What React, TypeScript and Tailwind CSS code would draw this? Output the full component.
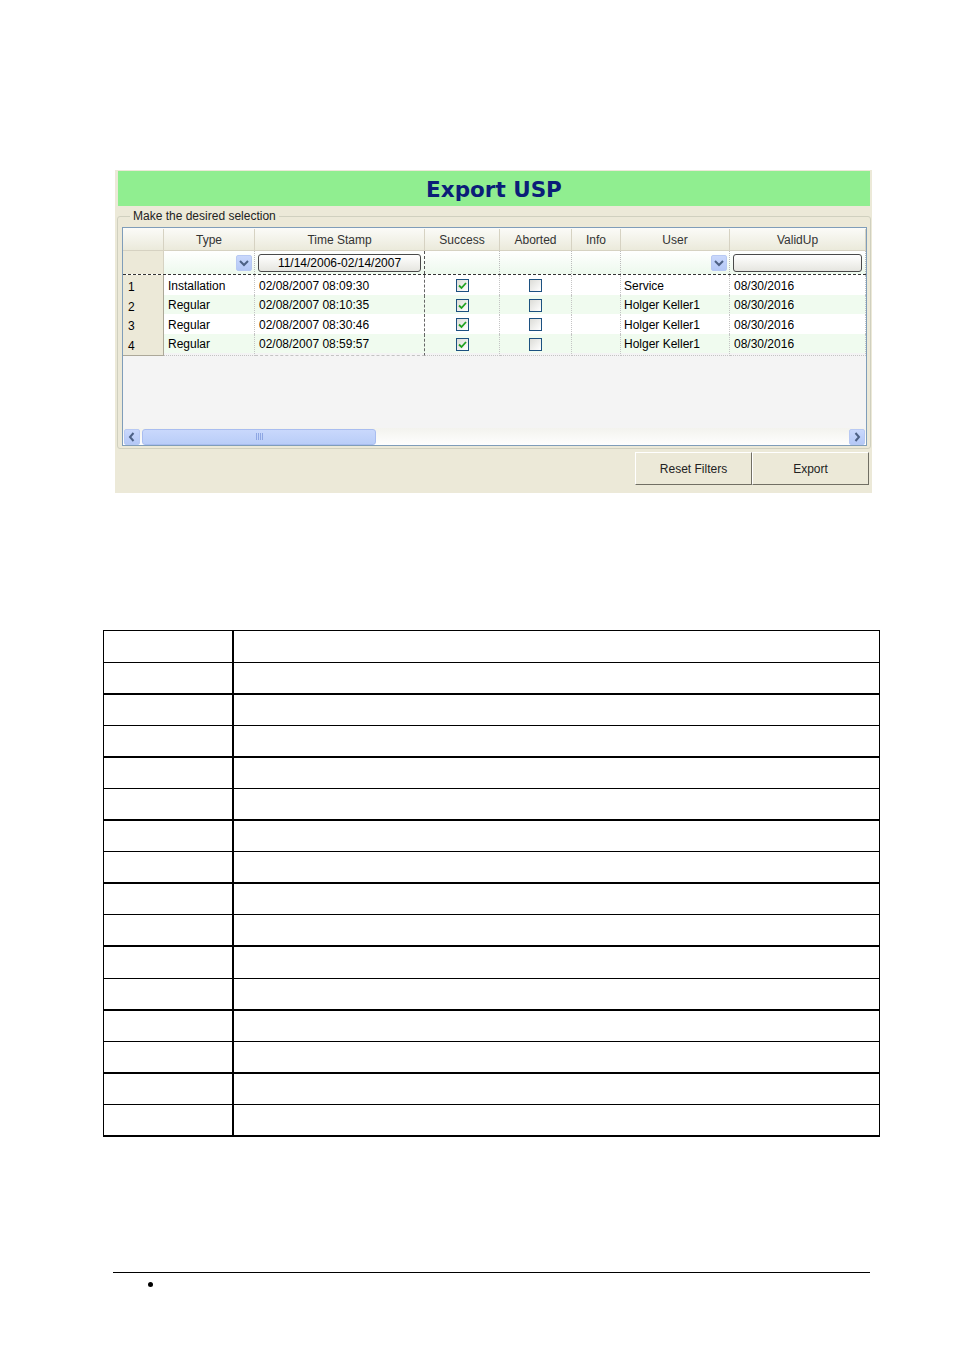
import React from 'react';

const cols = 'grid grid-cols-[41px_91px_170px_75px_72px_49px_109px_136px]';

const rows = [
  { n: '1', type: 'Installation', ts: '02/08/2007 08:09:30', ok: true, ab: false, user: 'Service', valid: '08/30/2016' },
  { n: '2', type: 'Regular', ts: '02/08/2007 08:10:35', ok: true, ab: false, user: 'Holger Keller1', valid: '08/30/2016' },
  { n: '3', type: 'Regular', ts: '02/08/2007 08:30:46', ok: true, ab: false, user: 'Holger Keller1', valid: '08/30/2016' },
  { n: '4', type: 'Regular', ts: '02/08/2007 08:59:57', ok: true, ab: false, user: 'Holger Keller1', valid: '08/30/2016' },
];

function Check({ on }: { on: boolean }) {
  return (
    <span className="w-[13px] h-[13px] border border-[#1c5180] bg-gradient-to-br from-[#dcdcd7] to-white flex items-center justify-center">
      {on && (
        <svg width="9" height="9" viewBox="0 0 9 9">
          <path d="M1 4.5 L3.5 7 L8 2" fill="none" stroke="#21a121" strokeWidth="1.8" />
        </svg>
      )}
    </span>
  );
}

function Arrow({ dir }: { dir: 'down' | 'left' | 'right' }) {
  const d = dir === 'down' ? 'M3 5 L7 9 L11 5' : dir === 'left' ? 'M8.5 3 L5 7 L8.5 11' : 'M5.5 3 L9 7 L5.5 11';
  return (
    <span className="w-[16px] h-[16px] rounded-[2px] bg-gradient-to-b from-[#c9d8fc] to-[#b4c8f6] border border-[#b8c9f3] flex items-center justify-center">
      <svg width="14" height="14" viewBox="0 0 14 14">
        <path d={d} fill="none" stroke="#4d6185" strokeWidth="2" />
      </svg>
    </span>
  );
}

const headers = ['Type', 'Time Stamp', 'Success', 'Aborted', 'Info', 'User', 'ValidUp'];

function ExportWindow() {
  return (
    <div className="ml-[115px] w-[757px] h-[323px] bg-[#ece9d8] flex flex-col pt-px pl-[3px] pr-[2px] font-['Liberation_Sans',Arial,sans-serif] text-[12px] text-black">
      <div className="h-[35px] bg-[#90ee90] flex items-center justify-center pt-[2px]">
        <span className="font-['DejaVu_Sans',Verdana,sans-serif] font-bold text-[21.5px] text-[#0b1d78] leading-none">Export USP</span>
      </div>

      <fieldset className="mt-[3px] -ml-px mr-0 border border-[#d0d0bf] rounded-[3px] pl-[4px] pr-[3px] pb-[2px] h-[240px]">
        <legend className="ml-[8px] px-[3px] text-[12px] text-[#222] leading-[14px]">Make the desired selection</legend>
        <div className="mt-[4px] h-[219px] border border-[#7f9db9] bg-[#f4f4f4] flex flex-col overflow-hidden">
          {/* header */}
          <div className={`${cols} h-[23px] pt-px bg-gradient-to-b from-[#fbfbf8] to-[#ebeadb] border-b border-[#d6d2c2]`}>
            <div className="border-r border-[#d6d2c2]" />
            {headers.map((h) => (
              <div key={h} className="flex items-center justify-center border-r border-[#d6d2c2] text-[#333]">
                {h}
              </div>
            ))}
          </div>

          {/* filter row */}
          <div className={`${cols} h-[24px] bg-gradient-to-b from-white to-[#edf9ed] border-b border-dashed border-[#333]`}>
            <div className="bg-[#ece9d8] border-r border-[#d6d2c2]" />
            <div className="flex items-center justify-end pr-[2px] border-r border-dotted border-[#bbb]">
              <Arrow dir="down" />
            </div>
            <div className="flex items-center px-[3px] border-r border-dashed border-[#555]">
              <span className="w-full h-[18px] rounded-[3px] border border-[#4a4a4a] bg-gradient-to-b from-white to-[#e6e6e0] flex items-center justify-center text-[12px]">
                11/14/2006-02/14/2007
              </span>
            </div>
            <div className="border-r border-dotted border-[#bbb]" />
            <div className="border-r border-dotted border-[#bbb]" />
            <div className="border-r border-dotted border-[#bbb]" />
            <div className="flex items-center justify-end pr-[2px] border-r border-dotted border-[#bbb]">
              <Arrow dir="down" />
            </div>
            <div className="flex items-center px-[3px] border-r border-dotted border-[#bbb]">
              <span className="w-full h-[18px] rounded-[3px] border border-[#4a4a4a] bg-gradient-to-b from-white to-[#e6e6e0]" />
            </div>
          </div>

          {/* data rows */}
          {rows.map((r, i) => (
            <div key={r.n} className={`${cols} h-[19.5px] ${i % 2 ? 'bg-[#f0fbef]' : 'bg-white'}`}>
              <div className="bg-[#ece9d8] border-r border-b border-[#aca899] pl-[5px] flex items-center pt-[3px]">{r.n}</div>
              <div className="pl-[4px] flex items-center border-r border-b border-dotted border-[#c4c4c4]">{r.type}</div>
              <div className="pl-[4px] flex items-center border-r border-dashed border-r-[#666] border-b border-b-[#c4c4c4]">{r.ts}</div>
              <div className="flex items-center justify-center border-r border-b border-dotted border-[#c4c4c4]">
                <Check on={r.ok} />
              </div>
              <div className="flex items-center justify-center border-r border-b border-dotted border-[#c4c4c4]">
                <Check on={r.ab} />
              </div>
              <div className="border-r border-b border-dotted border-[#c4c4c4]" />
              <div className="pl-[3px] flex items-center border-r border-b border-dotted border-[#c4c4c4]">{r.user}</div>
              <div className="pl-[4px] flex items-center border-r border-b border-dotted border-[#c4c4c4]">{r.valid}</div>
            </div>
          ))}

          <div className="flex-1" />

          {/* scrollbar */}
          <div className="h-[17px] flex items-center gap-[2px] px-px bg-gradient-to-b from-[#f3f3ee] to-[#fefefe]">
            <Arrow dir="left" />
            <div className="w-[234px] h-[16px] rounded-[3px] border border-[#a9bdf0] bg-gradient-to-b from-[#c9d8fc] to-[#b9cdf8] flex items-center justify-center">
              <span className="flex gap-[1px]">
                {[0, 1, 2, 3].map((k) => (
                  <span key={k} className="w-px h-[7px] bg-[#8ea6e3]" />
                ))}
              </span>
            </div>
            <div className="flex-1" />
            <Arrow dir="right" />
          </div>
        </div>
      </fieldset>

      <div className="mt-[3px] flex justify-end pr-px">
        <button className="w-[117px] h-[33px] bg-[#ece9d8] border border-t-white border-l-white border-r-[#716f64] border-b-[#716f64] text-[12px] text-[#222]">
          Reset Filters
        </button>
        <button className="w-[117px] h-[33px] bg-[#ece9d8] border border-t-white border-l-white border-r-[#716f64] border-b-[#716f64] text-[12px] text-[#222]">
          Export
        </button>
      </div>
    </div>
  );
}

function BlankTable() {
  return (
    <table className="ml-[103px] w-[777px] border-collapse">
      <tbody>
        {Array.from({ length: 16 }).map((_, i) => (
          <tr key={i} className="h-[31.6px]">
            <td className={`w-[129px] border-l border-black ${i % 2 ? 'border-b-2' : 'border-b'} ${i === 0 ? 'border-t' : ''} border-black`} />
            <td className={`border-l-2 border-r border-black ${i % 2 ? 'border-b-2' : 'border-b'} ${i === 0 ? 'border-t' : ''} border-black`} />
          </tr>
        ))}
      </tbody>
    </table>
  );
}

export default function App() {
  return (
    <div className="w-[954px] h-[1350px] bg-white pt-[170px] overflow-hidden">
      <ExportWindow />
      <div className="mt-[137px]">
        <BlankTable />
      </div>
      <div className="mt-[135px] ml-[113px] w-[757px] border-t border-black" />
      <div className="ml-[148px] mt-[9px] w-[5px] h-[5px] rounded-full bg-black" />
    </div>
  );
}
